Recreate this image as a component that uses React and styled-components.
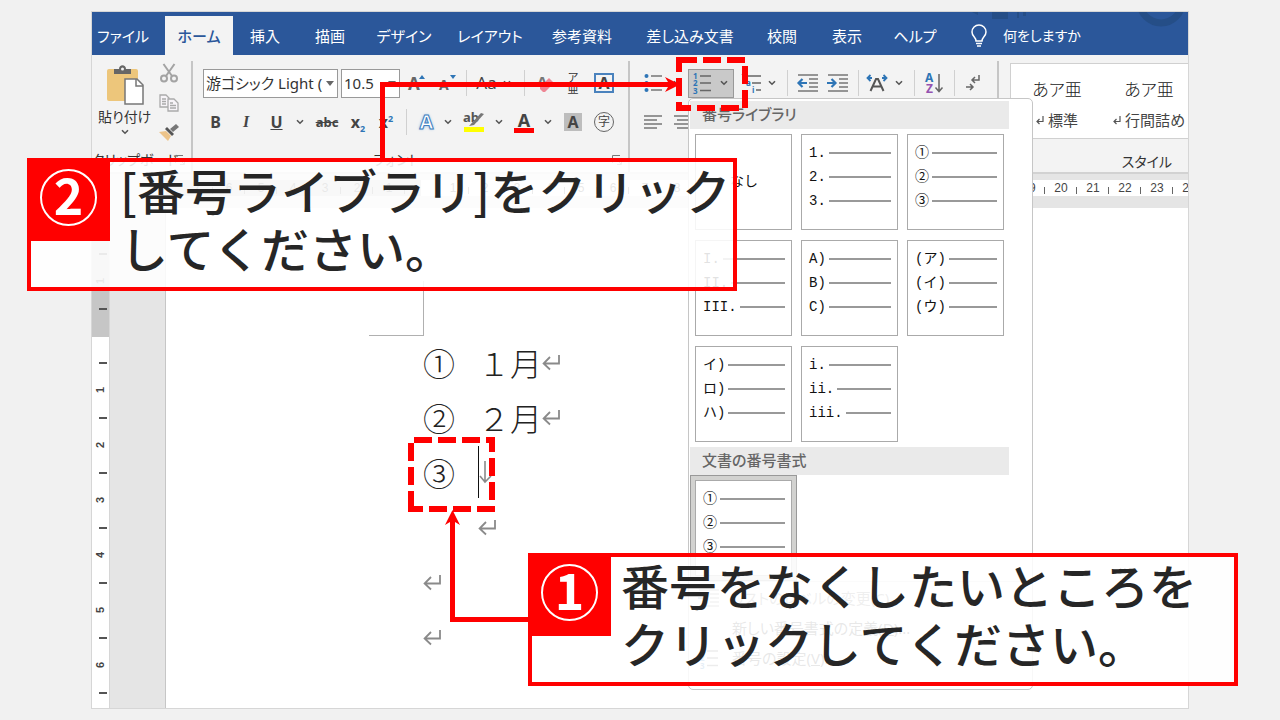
import React from "react";
import styled, { createGlobalStyle, css } from "styled-components";

const tabs = [
  { label: "ファイル", w: 62 },
  { label: "ホーム", w: 68, active: true },
  { label: "挿入", w: 64 },
  { label: "描画", w: 66 },
  { label: "デザイン", w: 82 },
  { label: "レイアウト", w: 90 },
  { label: "参考資料", w: 94 },
  { label: "差し込み文書", w: 122 },
  { label: "校閲", w: 62 },
  { label: "表示", w: 68 },
  { label: "ヘルプ", w: 68 },
];

const library = [
  null,
  ["1.", "2.", "3."],
  ["①", "②", "③"],
  ["I.", "II.", "III."],
  ["A)", "B)", "C)"],
  ["(ア)", "(イ)", "(ウ)"],
  ["イ)", "ロ)", "ハ)"],
  ["i.", "ii.", "iii."],
];

const range = (n) => Array.from({ length: n }, (_, i) => i + 1);

const Chevron = () => (
  <svg width="8" height="6" viewBox="0 0 8 6" fill="none" stroke="#555" strokeWidth="1.6">
    <path d="M1 1.2 4 4.2 7 1.2" />
  </svg>
);

const Launcher = () => (
  <svg width="10" height="10" viewBox="0 0 10 10" fill="none" stroke="#777">
    <path d="M.5 8V.5H8M4 4l5 5M9.500 5v4.500H5" />
  </svg>
);

const ReturnMark = () => (
  <svg width="20" height="16" viewBox="0 0 20 16" fill="none" stroke="#8a8a8a" strokeWidth="1.8">
    <path d="M17 1v8.500H2M8 3 1.600 9.500 8 15.500" />
  </svg>
);

const PasteIcon = () => (
  <svg width="38" height="40" viewBox="0 0 38 40">
    <rect x="1" y="4" width="31" height="32" rx="2" fill="#edc67b" />
    <path d="M8 9V4h5c0-5 7-5 7 0h5v5z" fill="#666" />
    <circle cx="16.500" cy="4" r="1.500" fill="#f3f3f3" />
    <path d="M19 14h12l6 6v19H19z" fill="#fff" stroke="#777" strokeWidth="1.500" />
    <path d="M30 14v7h7" fill="none" stroke="#777" strokeWidth="1.500" />
  </svg>
);

const CutIcon = () => (
  <svg width="18" height="20" viewBox="0 0 18 20" fill="none" stroke="#a3a3a3" strokeWidth="2">
    <path d="M3.500 1 12 13M14.500 1 6 13" />
    <circle cx="4" cy="15.500" r="3" />
    <circle cx="14" cy="15.500" r="3" />
  </svg>
);

const CopyIcon = () => (
  <svg width="20" height="18" viewBox="0 0 20 18" fill="#f7f4f8" stroke="#aaa" strokeWidth="1.300">
    <path d="M1 1h6l3 3v9H1z" />
    <path d="M9 5h6l4 4v8H9z" />
    <path d="M3 5h4M3 7.500h4M3 10h4M11 9h3M11 11.500h6M11 14h6" />
  </svg>
);

const PainterIcon = () => (
  <svg width="20" height="18" viewBox="0 0 20 18">
    <path d="M0 9l7-1 5 5-3 5z" fill="#edc48a" />
    <path d="M6 6l2-2 7 7-2 2z" fill="#555" />
    <path d="M11 6l6-5 3 3-6 5z" fill="#777" />
  </svg>
);

const GrowIcon = ({ down }) => (
  <svg width="18" height="18" viewBox="0 0 18 18">
    <text x="0" y="16" fontSize={down ? 14 : 17} fontWeight="700" fill="#666">A</text>
    <path d={down ? "M11 1h6l-3 4z" : "M11 5h6l-3-4z"} fill="#2e75b6" />
  </svg>
);

const EraserIcon = () => (
  <svg width="20" height="20" viewBox="0 0 20 20">
    <text x="1" y="14" fontSize="15" fontWeight="700" fill="#777">A</text>
    <path d="M4 14 13 5l5 5-9 9H7l-3-3z" fill="#ee8694" />
  </svg>
);

const BulletsIcon = () => (
  <svg width="18" height="20" viewBox="0 0 18 20">
    <path d="M7 3h11M7 10h11M7 17h11" stroke="#777" strokeWidth="1.500" />
    <g fill="#2e75b6">
      <circle cx="2.500" cy="3" r="2" />
      <circle cx="2.500" cy="10" r="2" />
      <circle cx="2.500" cy="17" r="2" />
    </g>
  </svg>
);

const NumberingIcon = () => (
  <svg width="20" height="22" viewBox="0 0 20 22">
    <path d="M8 4h11M8 11h11M8 18.500h11" stroke="#666" strokeWidth="1.500" />
    <g fill="#2e75b6" fontSize="8" fontWeight="700">
      <text x="1" y="7">1</text>
      <text x="1" y="14">2</text>
      <text x="1" y="22">3</text>
    </g>
  </svg>
);

const MultilevelIcon = () => (
  <svg width="20" height="20" viewBox="0 0 20 20">
    <path d="M6 3h14M11 10h9M15 17h5" stroke="#666" strokeWidth="1.500" />
    <g fill="#2e75b6" fontSize="8" fontWeight="700">
      <text x="0" y="6">1</text>
      <text x="5" y="13">a</text>
      <text x="11" y="20">i</text>
    </g>
  </svg>
);

const IndentIcon = ({ out }) => (
  <svg width="22" height="18" viewBox="0 0 22 18" fill="none">
    <path d="M1 1h20M12 5h9M12 9h9M12 13h9M1 17h20" stroke="#777" strokeWidth="1.400" />
    <path
      d={out ? "M10 9H2M5.500 5 1.500 9l4 4" : "M0 9h8M4.500 5l4 4-4 4"}
      stroke="#2e75b6"
      strokeWidth="2.200"
    />
  </svg>
);

const ScaleIcon = () => (
  <svg width="22" height="18" viewBox="0 0 22 18" fill="none">
    <path d="M4.500 17 10 5h2l5.500 12M7 12.500h8" stroke="#555" strokeWidth="2" />
    <path d="M6 4H2M4.500 1l-3 3 3 3M16 4h4M17.500 1l3 3-3 3" stroke="#2e75b6" strokeWidth="1.800" />
  </svg>
);

const SortIcon = () => (
  <svg width="18" height="22" viewBox="0 0 18 22">
    <text x="0" y="10" fontSize="12" fontWeight="700" fill="#2e75b6">A</text>
    <text x="1" y="21" fontSize="12" fontWeight="700" fill="#9452b0">Z</text>
    <path d="M14 2v17M10.500 15.500l3.500 4 3.500-4" fill="none" stroke="#666" strokeWidth="1.500" />
  </svg>
);

const MarksIcon = () => (
  <svg width="14" height="18" viewBox="0 0 14 18" fill="none" stroke="#666" strokeWidth="1.500">
    <path d="M13 1v5H6M9 3 6 6l3 3M0 13h7M4 10l3 3-3 3" />
  </svg>
);

const AlignIcon = ({ center }) => (
  <svg width="20" height="14" viewBox="0 0 20 14" stroke="#777" strokeWidth="1.500">
    <path d={center ? "M1 1h18M4 5h12M1 9h18M4 13h12" : "M1 1h18M1 5h13M1 9h18M1 13h13"} />
  </svg>
);

const HighlightIcon = () => (
  <svg width="22" height="22" viewBox="0 0 22 22">
    <text x="0" y="11" fontSize="13" fontWeight="700" fill="#555">ab</text>
    <path d="M6 15 18 2l3 1L11 14z" fill="#777" />
    <rect x="1" y="16" width="20" height="5" fill="#ff0" />
  </svg>
);

const BulbIcon = () => (
  <svg width="16" height="22" viewBox="0 0 16 22" fill="none" stroke="#fff" strokeWidth="1.500">
    <path d="M5 16c0-4-4-4.500-4-9a7 7 0 0 1 14 0c0 4.500-4 5-4 9zM5 18.500h6M6 21h4" />
  </svg>
);

const Decoration = styled.svg`
  position: absolute;
  top: 0;
  right: 0;
`;

const NumberTile = ({ items }) => (
  <Tile>
    {items ? (
      items.map((item) => (
        <TileRow key={item}>
          {item}
          <TileLine />
        </TileRow>
      ))
    ) : (
      <TileNone>なし</TileNone>
    )}
  </Tile>
);

const NumberMenu = () => (
  <Menu>
    <MenuHeading>番号ライブラリ</MenuHeading>
    <TileGrid>
      {library.map((items, i) => (
        <NumberTile key={i} items={items} />
      ))}
    </TileGrid>
    <MenuHeading>文書の番号書式</MenuHeading>
    <SelectedTile>
      <NumberTile items={["①", "②", "③"]} />
    </SelectedTile>
    <MenuList>
      <MenuItem disabled>
        <IndentIcon />
        <span>リストのレベルの変更(<u>C</u>)</span>
      </MenuItem>
      <MenuItem>
        <i />
        <span>新しい番号書式の定義(<u>D</u>)...</span>
      </MenuItem>
      <MenuItem>
        <NumberingIcon />
        <span>番号の設定(<u>V</u>)...</span>
      </MenuItem>
    </MenuList>
  </Menu>
);

const ClipboardGroup = () => (
  <Group $w={101} $top={2}>
    <Clipboard>
      <PasteButton>
        <PasteIcon />
        貼り付け
        <Chevron />
      </PasteButton>
      <ClipTools>
        <Tool aria-label="切り取り"><CutIcon /></Tool>
        <Tool aria-label="コピー"><CopyIcon /></Tool>
        <Tool aria-label="書式のコピー"><PainterIcon /></Tool>
      </ClipTools>
    </Clipboard>
    <GroupLabel>
      <span>クリップボード</span>
      <Launcher />
    </GroupLabel>
  </Group>
);

const Combo = ({ label, value, w }) => (
  <ComboBox $w={w}>
    <input aria-label={label} defaultValue={value} />
    <button aria-label={label + "の一覧"}>
      <svg width="8" height="5" viewBox="0 0 8 5"><path d="M0 0h8L4 5z" fill="#666" /></svg>
    </button>
  </ComboBox>
);

const FontGroup = () => (
  <Group $w={437} $top={8}>
    <ToolRow $pad={10}>
      <Combo label="フォント" value="游ゴシック Light (." w={135} />
      <ComboGap />
      <Combo label="フォント サイズ" value="10.5" w={59} />
      <Tool $w={34}><GrowIcon /></Tool>
      <Tool $w={28}><GrowIcon down /></Tool>
      <Divider $w={9} />
      <Tool $w={31}><Glyph $size={17}>Aa</Glyph></Tool>
      <Tool $w={10}><Chevron /></Tool>
      <Divider $w={24} />
      <Tool $w={20}><EraserIcon /></Tool>
      <Tool $w={34}><Ruby><span>ア</span><span>亜</span></Ruby></Tool>
      <Tool $w={28}><BoxedA>A</BoxedA></Tool>
    </ToolRow>
    <ToolRow $pad={7}>
      <Tool $w={31}><Glyph $bold>B</Glyph></Tool>
      <Tool $w={30}><Glyph $bold $serif>I</Glyph></Tool>
      <Tool $w={31}><Glyph $bold><u>U</u></Glyph></Tool>
      <Tool $w={16}><Chevron /></Tool>
      <Tool $w={38}><Glyph $size={13} $bold><s>abc</s></Glyph></Tool>
      <Tool $w={24}><Glyph $bold>x<sub>2</sub></Glyph></Tool>
      <Tool $w={32}><Glyph $bold>x<sup>2</sup></Glyph></Tool>
      <Divider $w={9} />
      <Tool $w={31}><OutlineA>A</OutlineA></Tool>
      <Tool $w={12}><Chevron /></Tool>
      <Tool $w={40}><HighlightIcon /></Tool>
      <Tool $w={10}><Chevron /></Tool>
      <Tool $w={40}><RedA>A</RedA></Tool>
      <Tool $w={8}><Chevron /></Tool>
      <Tool $w={42}><ShadedA>A</ShadedA></Tool>
      <Tool $w={20}><Enclosed>字</Enclosed></Tool>
    </ToolRow>
    <GroupLabel $center>
      <span>フォント</span>
      <Launcher />
    </GroupLabel>
  </Group>
);

const ParagraphGroup = () => (
  <Group $w={369} $top={8}>
    <ToolRow $pad={10}>
      <Tool $w={26}><BulletsIcon /></Tool>
      <Tool $w={22}><Chevron /></Tool>
      <NumberingAnchor>
        <NumberingButton aria-label="段落番号" aria-expanded="true">
          <NumberingIcon />
          <Chevron />
        </NumberingButton>
        <NumberMenu />
      </NumberingAnchor>
      <Tool $w={34}><MultilevelIcon /></Tool>
      <Tool $w={8}><Chevron /></Tool>
      <Divider $w={22} />
      <Tool $w={20}><IndentIcon out /></Tool>
      <Tool $w={40}><IndentIcon /></Tool>
      <Divider $w={1} />
      <Tool $w={36}><ScaleIcon /></Tool>
      <Tool $w={8}><Chevron /></Tool>
      <Divider $w={22} />
      <Tool $w={18}><SortIcon /></Tool>
      <Divider $w={22} />
      <Tool $w={16}><MarksIcon /></Tool>
    </ToolRow>
    <ToolRow $pad={10}>
      <Tool $w={26}><AlignIcon /></Tool>
      <Tool $w={34}><AlignIcon center /></Tool>
    </ToolRow>
  </Group>
);

const StyleMark = () => (
  <svg width="8" height="8" viewBox="0 0 8 8" fill="none" stroke="#555" strokeWidth="1.200">
    <path d="M7 0v5.500H1M3.500 3 1 5.500 3.500 8" />
  </svg>
);

const StylesGroup = () => (
  <Styles>
    <Gallery>
      {["標準", "行間詰め"].map((name) => (
        <StyleCard key={name}>
          <b>あア亜</b>
          <span><StyleMark /> {name}</span>
        </StyleCard>
      ))}
    </Gallery>
    <StylesLabel>スタイル</StylesLabel>
  </Styles>
);

const HorizontalRuler = () => (
  <RulerStrip>
    <Ruler>
      <RulerMargin>
        {[7, 6, 5, 4, 3, 2, 1].map((n) => (
          <React.Fragment key={n}>
            <RulerNumber>{n}</RulerNumber>
            <RulerTick />
          </React.Fragment>
        ))}
      </RulerMargin>
      <RulerBody>
        {range(24).map((n) => (
          <React.Fragment key={n}>
            <RulerTick />
            <RulerNumber>{n}</RulerNumber>
          </React.Fragment>
        ))}
      </RulerBody>
    </Ruler>
  </RulerStrip>
);

const VerticalRuler = () => (
  <VRuler>
    <VMargin>
      <VTick />
      <VNumber>1</VNumber>
      <VTick />
    </VMargin>
    <VBody>
      <VTick />
      {range(6).map((n) => (
        <React.Fragment key={n}>
          <VNumber>{n}</VNumber>
          <VTick />
        </React.Fragment>
      ))}
    </VBody>
  </VRuler>
);

const Callout = ({ number, lines, x, y }) => (
  <CalloutBox $x={x} $y={y}>
    <Badge><span>{number}</span></Badge>
    <CalloutText>
      {lines.map((line) => (
        <div key={line}>{line}</div>
      ))}
    </CalloutText>
  </CalloutBox>
);

const Arrows = () => (
  <Overlay width="800" height="640" viewBox="0 0 800 640">
    <g fill="none" stroke="#f00">
      <path d="M382.500 160V84.500H672M530 619.500H452.500V518" strokeWidth="5" />
      <path d="M679 60H745V108H679Z" strokeWidth="6" strokeDasharray="18 6" />
      <path d="M411 509V440H492V509Z" strokeWidth="6" strokeDasharray="18 6" />
    </g>
    <path d="M680 84.500 665 77l4.500 7.500L665 92zM452.500 510l-7.500 15 7.500-4.500 7.500 4.500z" fill="#f00" />
  </Overlay>
);

export default function App() {
  return (
    <Page>
      <GlobalStyle />
      <WordWindow>
        <TabBar>
          {tabs.map((tab) => (
            <Tab key={tab.label} $w={tab.w} $active={tab.active}>
              {tab.label}
            </Tab>
          ))}
          <TellMe>
            <BulbIcon />
            何をしますか
          </TellMe>
          <Decoration width="240" height="20" viewBox="0 0 240 20">
            <path d="M44 0h16v7H44zM69 0h2v6h-2zM75 0h3v4h-3zM24 0h6v3z" fill="#254e87" />
            <circle cx="213" cy="-10" r="21" fill="none" stroke="#254e87" strokeWidth="7" />
          </Decoration>
        </TabBar>
        <Ribbon>
          <ClipboardGroup />
          <FontGroup />
          <ParagraphGroup />
          <StylesGroup />
        </Ribbon>
        <HorizontalRuler />
        <Workspace>
          <VerticalRuler />
          <Gutter />
          <Sheet>
            <CornerMark />
            <Line><Marker>①</Marker>１月<ReturnMark /></Line>
            <Line><Marker>②</Marker>２月<ReturnMark /></Line>
            <Line>
              <Marker>③</Marker>
              <Caret />
              <svg width="14" height="24" viewBox="0 0 14 24" fill="none" stroke="#8a8a8a" strokeWidth="1.600">
                <path d="M6 1v21M1 16l5 6 6-6" />
              </svg>
            </Line>
            <Line><Marker /><ReturnMark /></Line>
            <Line><ReturnMark /></Line>
            <Line><ReturnMark /></Line>
          </Sheet>
        </Workspace>
      </WordWindow>
      <Arrows />
      <Callout number={2} x={27} y={158} lines={["[番号ライブラリ]をクリック", "してください。"]} />
      <Callout number={1} x={528} y={553} lines={["番号をなくしたいところを", "クリックしてください。"]} />
    </Page>
  );
}

// Styled Components
const GlobalStyle = createGlobalStyle`
  *, *::before, *::after {
    box-sizing: border-box;
  }
  body {
    margin: 0;
    background: #f1f1f1;
    color: #444;
    font: 15px/20px "Noto Sans", "Noto Sans CJK JP", sans-serif;
    font-feature-settings: "palt";
  }
  button, input {
    margin: 0;
    padding: 0;
    border: 0;
    background: none;
    color: inherit;
    font: inherit;
    font-feature-settings: inherit;
  }
  svg {
    display: block;
    flex-shrink: 0;
    overflow: visible;
  }
`;

const Page = styled.main`
  position: relative;
  display: flex;
  min-height: 100vh;
  padding: 11px 91px;
`;

const WordWindow = styled.section`
  display: flex;
  flex: 1;
  flex-direction: column;
  min-width: 0;
  border: 1px solid #d6d6d6;
  background: #fff;
`;

const TabBar = styled.nav`
  position: relative;
  display: flex;
  align-items: flex-end;
  height: 43px;
  overflow: hidden;
  background: #2b579a;
  color: #fff;
`;

const Tab = styled.button`
  flex-shrink: 0;
  width: ${({ $w }) => $w}px;
  height: 39px;
  white-space: nowrap;

  &:first-child {
    margin-right: 11px;
  }

  ${({ $active }) =>
    $active &&
    css`
      background: #f3f3f3;
      color: #2b579a;
      font-weight: 500;
    `}
`;

const TellMe = styled.button`
  display: flex;
  align-items: center;
  gap: 16px;
  height: 39px;
  margin-left: 22px;
  font-size: 14px;
  white-space: nowrap;
`;

const Ribbon = styled.div`
  display: flex;
  height: 119px;
  padding-top: 6px;
  border-bottom: 2px solid #d2d2d2;
  background: #f3f3f3;
`;

const Group = styled.div`
  display: flex;
  flex-direction: column;
  flex-shrink: 0;
  gap: 11px;
  width: ${({ $w }) => $w}px;
  padding-top: ${({ $top }) => $top}px;
  padding-bottom: 4px;
  border-right: 2px solid #c6c6c6;
`;

const GroupLabel = styled.div`
  display: flex;
  align-items: center;
  gap: 12px;
  height: 16px;
  margin-top: auto;
  padding-right: 6px;
  color: #333;
  font-size: 14px;
  line-height: 16px;
  white-space: nowrap;

  span {
    flex: 1;
    min-width: 0;
    text-align: ${({ $center }) => ($center ? "center" : "left")};
  }
`;

const Clipboard = styled.div`
  display: flex;
  justify-content: space-between;
  height: 78px;
  padding: 0 12px 0 6px;
`;

const PasteButton = styled.button`
  display: flex;
  flex-direction: column;
  align-items: center;
  gap: 4px;
  padding-top: 2px;
  color: #333;
  font-size: 14px;
  line-height: 16px;
  white-space: nowrap;
`;

const ClipTools = styled.div`
  display: flex;
  flex-direction: column;
  justify-content: space-between;
`;

const ToolRow = styled.div`
  display: flex;
  flex-shrink: 0;
  align-items: center;
  height: 28px;
  padding-left: ${({ $pad }) => $pad}px;
`;

const Tool = styled.button`
  display: flex;
  flex-shrink: 0;
  align-items: center;
  justify-content: center;
  width: ${({ $w }) => ($w ? $w + "px" : "auto")};
`;

const Divider = styled.span`
  width: ${({ $w }) => $w}px;
  height: 26px;
  background: linear-gradient(#d0d0d0, #d0d0d0) center / 1px 100% no-repeat;
`;

const ComboBox = styled.div`
  display: flex;
  width: ${({ $w }) => $w}px;
  height: 29px;
  border: 1px solid #999;
  background: #fff;
  color: #333;

  input {
    flex: 1;
    min-width: 0;
    padding-left: 2px;
    outline: 0;
  }

  button {
    display: flex;
    align-items: center;
    justify-content: center;
    width: 14px;
  }
`;

const ComboGap = styled.span`
  width: 3px;
`;

const Glyph = styled.span`
  font-family: ${({ $serif }) => ($serif ? '"Liberation Serif", serif' : "inherit")};
  font-size: ${({ $size }) => $size || 16}px;
  font-style: ${({ $serif }) => ($serif ? "italic" : "normal")};
  font-weight: ${({ $bold }) => ($bold ? 700 : 400)};

  sub,
  sup {
    color: #2e75b6;
    font-size: 9px;
    line-height: 0;
  }
`;

const Ruby = styled.span`
  display: flex;
  flex-direction: column;
  color: #333;
  font-size: 11px;
  line-height: 11px;
`;

const BoxedA = styled.span`
  width: 20px;
  height: 20px;
  border: 2px solid #4a82bd;
  font-size: 16px;
  font-weight: 700;
  line-height: 16px;
`;

const OutlineA = styled.span`
  color: #fff;
  font-size: 20px;
  font-weight: 700;
  -webkit-text-stroke: 1px #3f7fc0;
  text-shadow: 0 0 3px #6ea6dc;
`;

const RedA = styled.span`
  width: 20px;
  height: 21px;
  border-bottom: 5px solid #f00;
  font-size: 18px;
  font-weight: 700;
  line-height: 16px;
`;

const ShadedA = styled.span`
  width: 18px;
  height: 18px;
  background: #bdbdbd;
  font-size: 16px;
  font-weight: 700;
  line-height: 18px;
`;

const Enclosed = styled.span`
  flex-shrink: 0;
  width: 20px;
  height: 20px;
  border: 1px solid #666;
  border-radius: 50%;
  font-size: 12px;
  line-height: 17px;
`;

const NumberingAnchor = styled.div`
  position: relative;
`;

const NumberingButton = styled.button`
  display: flex;
  align-items: center;
  justify-content: space-between;
  width: 46px;
  height: 29px;
  padding: 0 5px 0 3px;
  border: 1px solid #999;
  background: #c9c9c9;
`;

const Menu = styled.div`
  position: absolute;
  top: 100%;
  left: 0;
  z-index: 1;
  width: 345px;
  padding: 2px 1px 16px;
  border: 1px solid #c6c6c6;
  border-radius: 5px;
  background: #fff;
`;

const MenuHeading = styled.div`
  height: 28px;
  margin-right: 22px;
  padding: 4px 12px;
  background: #eaeaea;
  color: #666;
  font-weight: 500;
  line-height: 18px;
`;

const TileGrid = styled.div`
  display: grid;
  grid-template-columns: repeat(3, 97px);
  gap: 10px 9px;
  padding: 5px;
`;

const Tile = styled.button`
  display: flex;
  flex-direction: column;
  width: 97px;
  height: 96px;
  padding: 6px 6px 0 7px;
  border: 1px solid #aaa;
  background: #fff;
  color: #111;
  font: 14px/24px "Liberation Mono", "Noto Sans CJK JP", monospace;
  font-feature-settings: normal;
`;

const TileRow = styled.span`
  display: flex;
  align-items: center;
  gap: 3px;
  width: 100%;
  height: 24px;
`;

const TileLine = styled.i`
  flex: 1;
  height: 2px;
  background: #999;
`;

const TileNone = styled.span`
  margin: auto;
  padding-bottom: 6px;
`;

const SelectedTile = styled.div`
  width: 107px;
  height: 106px;
  padding: 4px;
  border: 1px solid #999;
  background: #d2d2d0;
`;

const MenuList = styled.div`
  padding-top: 1px;
  border-top: 1px solid #ddd;
`;

const MenuItem = styled.button`
  display: flex;
  align-items: center;
  gap: 12px;
  width: 100%;
  height: 30px;
  padding-left: 8px;
  opacity: ${({ disabled }) => (disabled ? 0.7 : 1)};

  i,
  svg {
    width: 22px;
  }
`;

const Styles = styled.div`
  display: flex;
  flex: 1;
  flex-direction: column;
  min-width: 0;
  padding: 2px 0 0 11px;
  overflow: hidden;
`;

const Gallery = styled.div`
  display: flex;
  height: 76px;
  border: 1px solid #d0d0d0;
  border-right: 0;
  background: #fff;
`;

const StyleCard = styled.button`
  display: flex;
  flex-shrink: 0;
  flex-direction: column;
  align-items: center;
  justify-content: space-between;
  width: 92px;
  padding: 16px 0 8px;

  b {
    color: #222;
    font-size: 17px;
    font-weight: 300;
  }

  span {
    display: flex;
    align-items: center;
    gap: 4px;
    white-space: nowrap;
  }
`;

const StylesLabel = styled.div`
  margin: auto 16px 0;
  color: #333;
  font-size: 14px;
  line-height: 20px;
  text-align: right;
`;

const RulerStrip = styled.div`
  padding: 6px 0 12px 74px;
  background: #e5e5e5;
`;

const Ruler = styled.div`
  display: flex;
  height: 16px;
  overflow: hidden;
  background: #fff;
  font: 12px/16px "Liberation Sans", sans-serif;
`;

const RulerMargin = styled.div`
  display: flex;
  flex-shrink: 0;
  justify-content: flex-end;
  width: 255px;
  padding-right: 10px;
  background: #c6c6c6;
`;

const RulerBody = styled.div`
  display: flex;
  padding-left: 10px;
`;

const RulerNumber = styled.span`
  flex-shrink: 0;
  width: 20px;
  text-align: center;
`;

const RulerTick = styled.i`
  flex-shrink: 0;
  width: 12px;
  background: linear-gradient(#666, #666) 5px 7px / 1px 7px no-repeat;
`;

const Workspace = styled.div`
  display: flex;
  flex: 1;
`;

const VRuler = styled.div`
  display: flex;
  flex-direction: column;
  width: 18px;
  border-right: 1px solid #d6d6d6;
  font: 700 11px/17px "Liberation Sans", sans-serif;
`;

const VMargin = styled.div`
  display: flex;
  flex-direction: column;
  justify-content: flex-end;
  height: 129px;
  padding-bottom: 15px;
  background: #c6c6c6;
`;

const VBody = styled.div`
  padding-top: 12px;
`;

const VNumber = styled.span`
  display: block;
  width: 17px;
  height: 28px;
  text-align: center;
  transform: rotate(180deg);
  writing-mode: vertical-rl;
`;

const VTick = styled.i`
  display: block;
  height: 27px;
  background: linear-gradient(#555, #555) 7px 13px / 8px 2px no-repeat;
`;

const Gutter = styled.div`
  width: 56px;
  border-right: 1px solid #c6c6c6;
  background: #e5e5e5;
`;

const Sheet = styled.article`
  flex: 1;
  padding: 73px 0 0 257px;
  color: #222;
  font: 300 32px/46px "Noto Sans CJK JP", sans-serif;
  font-feature-settings: normal;
`;

const CornerMark = styled.div`
  width: 55px;
  height: 55px;
  margin-left: -54px;
  border: solid #b0b0b0;
  border-width: 0 1px 1px 0;
`;

const Line = styled.div`
  display: flex;
  align-items: center;
  height: 55px;
  padding-bottom: 3px;
`;

const Marker = styled.span`
  width: 55px;
`;

const Caret = styled.i`
  width: 1px;
  height: 52px;
  background: #111;
`;

const Overlay = styled.svg`
  position: absolute;
  top: 0;
  left: 0;
  z-index: 2;
  pointer-events: none;
`;

const CalloutBox = styled.aside`
  position: absolute;
  top: ${({ $y }) => $y}px;
  left: ${({ $x }) => $x}px;
  z-index: 3;
  display: flex;
  width: 710px;
  height: 133px;
  border: 4px solid #f00;
  background: rgba(255, 255, 255, 0.88);
`;

const Badge = styled.div`
  flex-shrink: 0;
  width: 79px;
  height: 79px;
  padding: 7px 9px;
  background: #f00;
  color: #fff;
  font: 700 50px/44px "Noto Sans CJK JP", sans-serif;
  text-align: center;

  span {
    display: block;
    width: 57px;
    height: 57px;
    border: 2px solid #fff;
    border-radius: 50%;
  }
`;

const CalloutText = styled.div`
  margin-top: -2px;
  padding-left: 10px;
  color: #262626;
  font: 500 48px/58px "Noto Sans CJK JP", sans-serif;
  font-feature-settings: normal;
  white-space: nowrap;
`;
